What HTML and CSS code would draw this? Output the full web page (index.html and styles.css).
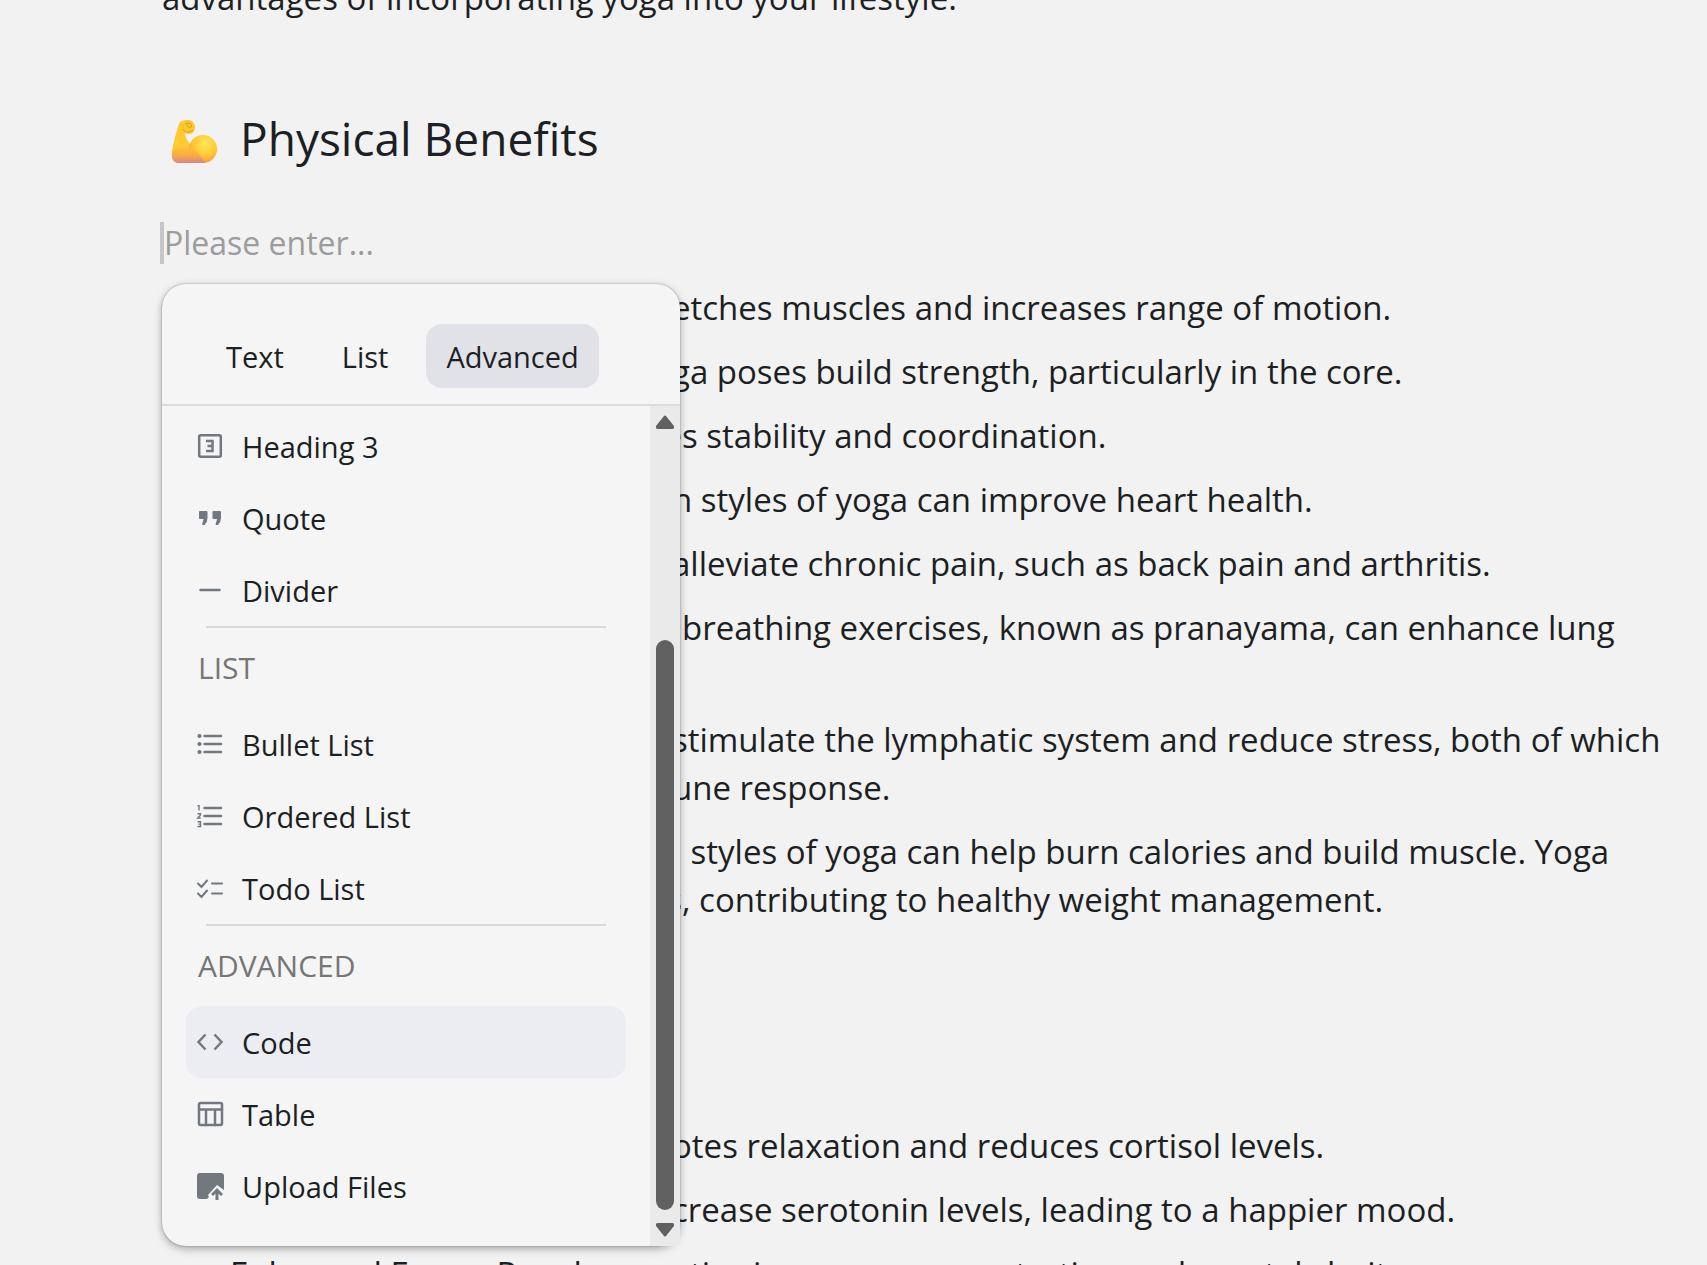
FILE: index.html
```html
<!DOCTYPE html>
<html lang="en">
<head>
<meta charset="utf-8">
<title>Benefits of Yoga</title>
<link rel="stylesheet" href="styles.css">
</head>
<body>
<main class="doc">
  <p class="line intro">advantages of incorporating yoga into your lifestyle.</p>
  <h2 class="heading">
    <svg class="emoji" viewBox="0 0 48 48" aria-hidden="true">
      <defs>
        <linearGradient id="arm" x1="0" y1="0" x2="0" y2="1"><stop offset="0" stop-color="#ffc62c"/><stop offset=".6" stop-color="#ffcb33"/><stop offset=".82" stop-color="#f9a83f"/><stop offset="1" stop-color="#d8828a"/></linearGradient>
        <linearGradient id="fore" x1="0" y1="0" x2="0" y2="1"><stop offset="0" stop-color="#ffc933" stop-opacity="0"/><stop offset=".5" stop-color="#fdb23a"/><stop offset="1" stop-color="#da848a"/></linearGradient>
        <radialGradient id="bicep" cx=".58" cy=".3" r=".75"><stop offset="0" stop-color="#ffe95c"/><stop offset=".55" stop-color="#ffc933"/><stop offset=".8" stop-color="#fbab3c"/><stop offset="1" stop-color="#dd8885"/></radialGradient>
      </defs>
      <path fill="url(#arm)" d="M9 6C10 3 14 2 18 2c4 0 7 3 7 7 0 4-2 7-6 7l-4-1c0 4 2 7 5 11l6 6 6 12-6 1H9c-5 0-8-4-7-10C3 25 6 15 9 6Z"/>
      <circle cx="33" cy="31" r="14" fill="url(#bicep)"/>
      <path fill="url(#fore)" d="M20 27c5 4 11 10 15 18H10c-5 0-8-3-8-8 8 1 14-3 18-10Z"/>
      <path fill="none" stroke="#e39a14" stroke-width="1" d="M13 11c2 4 7 4 10 1M15 6c4-2 8 0 6 3-2 1-4 0-4-2"/>
    </svg>
    <span>Physical Benefits</span>
  </h2>
  <div class="entry">
    <input class="line entry-input" type="text" aria-label="Block text" placeholder="Please enter...">
    <section class="menu" aria-label="Insert block">
      <nav class="tabs">
        <button class="tab" type="button">Text</button>
        <button class="tab" type="button">List</button>
        <button class="tab tab-active" type="button">Advanced</button>
      </nav>
      <div class="menu-body">
        <div class="menu-list">
          <button class="item" type="button"><svg class="icon" viewBox="0 0 28 28"><rect x="3.200" y="3.200" width="21.600" height="21.600" rx="1.500"/><path stroke-linecap="butt" d="M10 9h6.500v10H10M11.500 14h5"/></svg>Heading 3</button>
          <button class="item" type="button"><svg class="icon icon-fill" viewBox="0 0 28 28"><path d="M4 7h6.500q1 0 1 1v6q0 4-3 7H6.500q-1-1 0-2l1-4H4q-1 0-1-1V8q0-1 1-1ZM17.500 7H24q1 0 1 1v6q0 4-3 7h-2q-1-1 0-2l1-4h-3.500q-1 0-1-1V8q0-1 1-1Z"/></svg>Quote</button>
          <button class="item" type="button"><svg class="icon" viewBox="0 0 28 28"><path d="M4.500 14h19"/></svg>Divider</button>
          <hr class="rule">
          <h3 class="label">LIST</h3>
          <button class="item" type="button"><svg class="icon" viewBox="0 0 28 28"><path d="M8.500 6H25M8.500 14H25M8.500 22H25"/><g class="dot"><circle cx="3.500" cy="6" r="2.100"/><circle cx="3.500" cy="14" r="2.100"/><circle cx="3.500" cy="22" r="2.100"/></g></svg>Bullet List</button>
          <button class="item" type="button"><svg class="icon" viewBox="0 0 28 28"><path d="M8.500 6H25M8.500 14H25M8.500 22H25"/><path class="thin" d="M1.500 3.800H3V8.500M1.500 11.700h3v1.300l-2.800 3h3M1.500 19.800h3v4.700h-3M2.500 22.100h2"/></svg>Ordered List</button>
          <button class="item" type="button"><svg class="icon todo" viewBox="0 0 28 28"><path d="M2 9.500l3.500 3.500L11 6.500M2 19.500l3.500 3.500 5.500-6.500M16 9.500h10M16 19.500h10"/></svg>Todo List</button>
          <hr class="rule">
          <h3 class="label">ADVANCED</h3>
          <button class="item item-active" type="button"><svg class="icon" viewBox="0 0 28 28"><path stroke-linecap="butt" d="M9.500 6.500L2.500 14l7 7.500M18.500 6.500l7 7.500-7 7.500"/></svg>Code</button>
          <button class="item" type="button"><svg class="icon" viewBox="0 0 28 28"><rect x="3" y="3" width="23" height="22" rx="1.500"/><path d="M3 9.500h23M10 9.500V25M19 9.500V25"/></svg>Table</button>
          <button class="item" type="button"><svg class="icon icon-fill" viewBox="0 0 28 28"><path d="M4 1h21q3 0 3 3v14l-7-5-9 10 1 2-2 2H4q-3 0-3-3V4q0-3 3-3Z"/><path d="M21 16l6 6-2 2-2.500-2.500V28h-3v-6.500L17 24l-2-2Z"/></svg>Upload Files</button>
        </div>
        <div class="scrollbar" aria-hidden="true">
          <svg class="arrow" viewBox="0 0 18 14"><path d="M8 1q1-1 2 0l8 10q1 3-2 3H2q-3 0-2-3Z"/></svg>
          <div class="track"><div class="thumb"></div></div>
          <svg class="arrow" viewBox="0 0 18 14"><path d="M8 13q1 1 2 0l8-10q1-3-2-3H2q-3 0-2 3Z"/></svg>
        </div>
      </div>
    </section>
  </div>
  <ul class="points">
    <li><p class="line"><span class="lead">Flexibility: Regular practice str</span>etches muscles and increases range of motion.</p></li>
    <li><p class="line"><span class="lead">Strength: Many yo</span>ga poses build strength, particularly in the core.</p></li>
    <li><p class="line"><span class="lead lead-wide">Balance: Practice enhance</span>s stability and coordination.</p></li>
    <li><p class="line"><span class="lead">Heart Health: Certai</span>n styles of yoga can improve heart health.</p></li>
    <li><p class="line"><span class="lead">Pain Relief: Yoga can </span>alleviate chronic pain, such as back pain and arthritis.</p></li>
    <li><p class="line"><span class="lead lead-wide">Better Breathing: Yogic </span>breathing exercises, known as pranayama, can enhance lung</p><p class="line">capacity.</p></li>
    <li><p class="line"><span class="lead">Immunity: Yoga can </span>stimulate the lymphatic system and reduce stress, both of which</p><p class="line"><span class="lead">support a healthy imm</span>une response.</p></li>
    <li><p class="line"><span class="lead lead-wide">Weight: Certain</span> styles of yoga can help burn calories and build muscle. Yoga</p><p class="line"><span class="lead lead-wide">also promotes mindfulness</span>, contributing to healthy weight management.</p></li>
  </ul>
  <ul class="points points-next">
    <li><p class="line"><span class="lead">Stress Relief: Yoga prom</span>otes relaxation and reduces cortisol levels.</p></li>
    <li><p class="line"><span class="lead">Improved Mood: It can in</span>crease serotonin levels, leading to a happier mood.</p></li>
    <li><p class="line plain">Enhanced Focus: Regular practice improves concentration and mental clarity.</p></li>
  </ul>
</main>
</body>
</html>
```
FILE: styles.css
```css
* { box-sizing: border-box; }
body {
  margin: 0;
  height: 100vh;
  overflow: hidden;
  background: #f2f2f2;
  color: #1c1f23;
  font-family: "Open Sans", "Noto Sans", sans-serif;
}
button, input { font: inherit; color: inherit; border: 0; background: none; margin: 0; padding: 0; }
.doc { margin-top: -26px; padding-left: 162px; }
.line { margin: 0; font-size: 33px; line-height: 48px; height: 48px; white-space: nowrap; }
.heading {
  display: flex; align-items: center; gap: 22px;
  margin: 80px 0 0; height: 72px; padding-left: 8px;
  font-size: 46px; line-height: 72px; font-weight: 400;
}
.emoji { width: 48px; height: 48px; margin-top: 8px; }
.entry { position: relative; margin-bottom: 16px; padding: 48px 0 4px; }
.entry-input {
  display: block; width: 100%; height: 42px; margin-left: -2px;
  border-left: 4px solid #c6c6ca;
  font-size: 32px; line-height: 42px;
}
.entry-input::placeholder { color: #9c9c9c; opacity: 1; }
.menu {
  position: absolute; left: 0; top: 100%; margin-top: 16px; width: 518px; z-index: 1;
  border-radius: 24px; background: #f5f5f5;
  box-shadow: 0 0 2px rgba(0,0,0,.35), 0 3px 8px rgba(0,0,0,.3);
}
.tabs { display: flex; gap: 18px; padding: 40px 44px 16px; border-bottom: 2px solid #dcdcdc; }
.tab { height: 64px; padding: 0 20px; border-radius: 16px; font-size: 29px; }
.tab-active { background: #e1e2e8; }
.menu-body { display: flex; }
.menu-list { flex: 1; padding: 4px 24px 24px; }
.item { display: flex; align-items: center; gap: 18px; width: 100%; height: 72px; padding-left: 10px; border-radius: 16px; font-size: 29px; text-align: left; }
.item-active { background: #ecedf3; }
.icon { width: 28px; height: 28px; fill: none; stroke: #737880; stroke-width: 2.5; stroke-linecap: round; }
.icon-fill, .dot { fill: #737880; stroke: none; }
.thin { stroke-width: 1.4; stroke-linecap: butt; }
.todo { stroke-width: 2; }
.rule { margin: 0 20px; border: 0; border-top: 2px solid #dadada; }
.label { margin: 0; padding-left: 12px; font-size: 30px; font-weight: 400; line-height: 80px; color: #767676; }
.scrollbar { display: flex; flex-direction: column; align-items: center; width: 30px; padding: 9px 0; background: #eaeaea; }
.arrow { width: 18px; height: 14px; fill: #606060; }
.track { flex: 1; display: flex; align-items: flex-end; padding-bottom: 13px; }
.thumb { width: 18px; height: 570px; border-radius: 9px; background: #606060; }
.points { list-style: none; margin: 0; padding: 0; display: grid; gap: 16px; }
.points-next { margin-top: 198px; }
.lead { display: inline-flex; justify-content: flex-end; width: 510px; white-space: pre; }
.lead-wide { width: 520px; }
.plain { padding-left: 68px; }
```
